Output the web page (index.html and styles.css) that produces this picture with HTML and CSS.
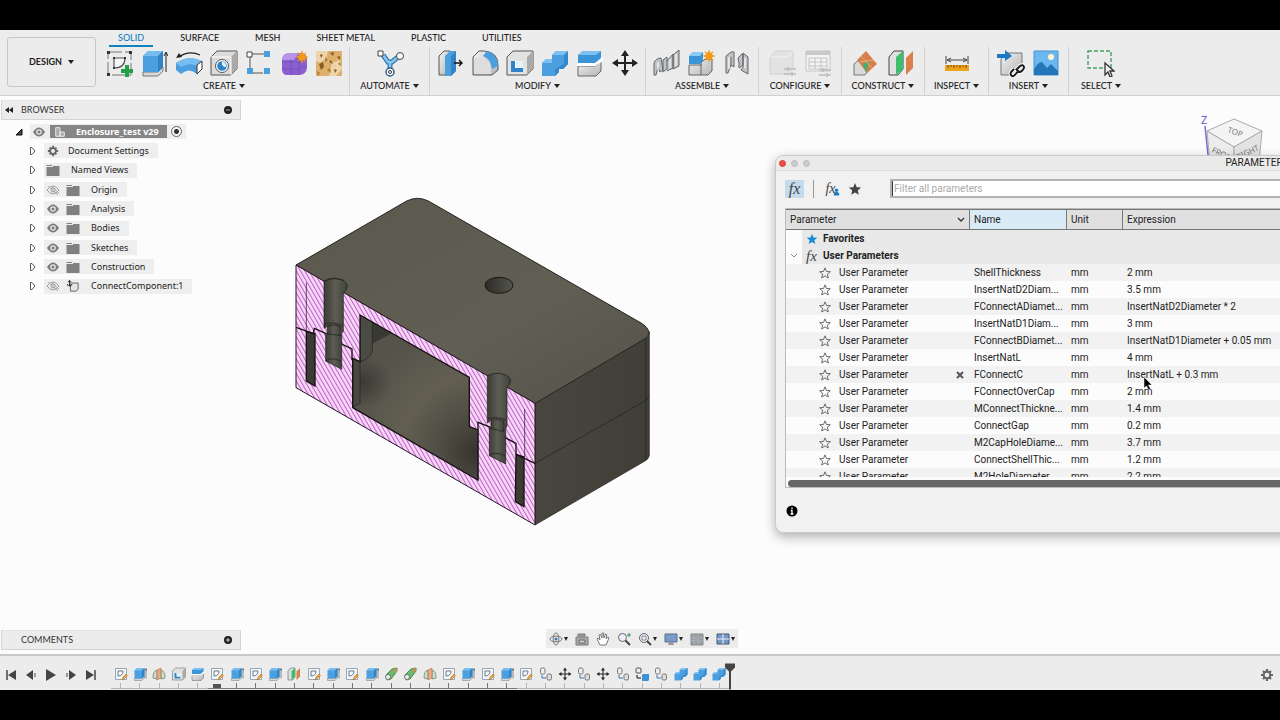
FILE: index.html
```html
<!DOCTYPE html>
<html lang="en">
<head>
<meta charset="utf-8">
<title>Enclosure_test v29</title>
<link rel="stylesheet" href="styles.css">
</head>
<body>
<svg class="sprite" aria-hidden="true">
  <defs>
    <linearGradient id="steel" x1="0" y1="0" x2="1" y2="1"><stop offset="0" stop-color="#f2f2f2"/><stop offset="1" stop-color="#b4b4b4"/></linearGradient>
    <symbol id="i-sketch" viewBox="0 0 28 28"><path d="M3 3h23v23H3z" fill="none" stroke="#777" stroke-dasharray="14 3"/><path d="M9 9h11Q20 19 9 19z" fill="#f6f6f6" stroke="#555" stroke-width="1.200"/><path d="M2 2h3v3H2zM24 2h3v3h-3zM2 24h3v3H2zM8 8h2v2H8zM19 8h2v2h-2zM8 18h2v2H8z" fill="#333"/><path d="M20 16h4v4h4v4h-4v4h-4v-4h-4v-4h4z" fill="#24a148"/></symbol>
    <symbol id="i-extrude" viewBox="0 0 28 28"><path d="M3 23h15l5-5v4l-5 5H3z" fill="#d8d8d8" stroke="#777"/><path d="M3 7l5-5h15v16l-5 5H3z" fill="#4b9fdf"/><path d="M3 7l5-5h15l-5 5z" fill="#77bdf0"/><path d="M18 7l5-5v16l-5 5z" fill="#2f83c6"/><path d="M26 23V4m-2 3l2-4 2 4" stroke="#222" fill="none"/></symbol>
    <symbol id="i-revolve" viewBox="0 0 28 28"><path d="M4 8Q14 1 25 6" fill="none" stroke="#222" stroke-width="1.3"/><path d="M1 9l3-5 3 4z" fill="#222"/><path d="M1 14Q14 5 27 13l-5 12Q14 18 6 25l-5-4z" fill="#4b9fdf"/><path d="M1 14Q14 5 27 12l-5 5Q14 13 6 18z" fill="#78bdf0"/><path d="M22 16l5-4v8l-5 5z" fill="#fff" stroke="#333"/></symbol>
    <symbol id="i-hole" viewBox="0 0 28 28"><path d="M1 8l6-6h20v18l-6 6H1z" fill="#dcdcdc" stroke="#555"/><path d="M21 8l6-6v18l-6 6z" fill="#a9a9a9"/><path d="M1 8h20v18" fill="none" stroke="#fff"/><circle cx="12" cy="17" r="6.5" fill="#fff" stroke="#555"/><circle cx="12" cy="17" r="4.8" fill="#2e84c9"/><path d="M12 12q5 2 4 6-5 0-4-6" fill="#e4f2fb"/></symbol>
    <symbol id="i-pattern" viewBox="0 0 28 28"><path d="M5 6v18h18M5 5h18" stroke="#555" fill="none" stroke-dasharray="14 3"/><path d="M2 3h5v5H2z" fill="#fff" stroke="#444"/><path d="M19 2h6v6h-6zM2 19h6v6H2zM19 19h6v6h-6z" fill="#4b9fdf"/></symbol>
    <symbol id="i-form" viewBox="0 0 28 28"><path d="M2 10Q3 4 10 4h12q5 1 5 7v8q-1 7-8 7H7q-5 0-5-6z" fill="#8b5fd0"/><path d="M2 11Q3 4 10 4h9q-4 5-5 7z" fill="#b594ea"/><path d="M2 13h17l7-3M11 10v16M2 20h16l8-3M19 12v14" stroke="#6f49b4" fill="none" stroke-width=".6"/><use href="#burst" x="0" y="0"/></symbol>
    <symbol id="burst" viewBox="0 0 28 28"><path d="M22 1l1.300 4 3.500-2-2 3.500 4 1.500-4 1.500 2 3.500-3.500-2L22 15l-1.300-4-3.500 2 2-3.500-4-1.500 4-1.500-2-3.500 3.500 2z" fill="#f39a12"/></symbol>
    <symbol id="i-volume" viewBox="0 0 28 28"><path d="M1 2h26v25H1z" fill="#dcb06c"/><path d="M1 2h12l-2 8-6 4-4-2zM17 14l8-3 2 9-6 7h-7z" fill="#ecd5ac"/><path d="M5 5l3 1-2 3zM15 4l4-1-1 4zM4 15l4-2 1 5-3 3zM14 13l2-2 2 4zM19 20l3 1-2 3zM22 8l3-1v4z" fill="#8a5a20"/><path d="M10 8l3 3-3 2zM12 21l3-2 1 5zM23 15l2-2 1 4zM2 22l3 2-2 3z" fill="#b9772c"/></symbol>
    <symbol id="i-auto" viewBox="0 0 28 28"><path d="M7 6l5 7h4l6-5M14 13v8" stroke="#2e79b5" stroke-width="5" fill="none"/><path d="M7 6l5 7h4l6-5M14 13v8" stroke="#8fc7ec" stroke-width="2.500" fill="none"/><path d="M2 2h5v5H2z" fill="#fff" stroke="#444"/><circle cx="24" cy="7" r="3.500" fill="#fff" stroke="#444"/><circle cx="14" cy="23" r="4" fill="#fff" stroke="#2e5f8c" stroke-width="1.500"/><circle cx="14" cy="23" r="1.500" fill="none" stroke="#333"/></symbol>
    <symbol id="i-press" viewBox="0 0 28 28"><path d="M3 7l5-5h6v19l-5 5H3z" fill="url(#steel)" stroke="#555"/><path d="M9 7l5-5h6v20l-5 5H9z" fill="#4b9fdf"/><path d="M15 7l5-5v20l-5 5z" fill="#2f83c6"/><path d="M18 14h8m-3-3l3 3-3 3" stroke="#111" fill="none" stroke-width="1.400"/></symbol>
    <symbol id="i-fillet" viewBox="0 0 28 28"><path d="M2 8l6-6h5q14 1 14 14v5l-6 5H2z" fill="url(#steel)" stroke="#555"/><path d="M12 7l4-5q11 3 11 15l-6 3Q20 10 12 7z" fill="#4b9fdf"/><path d="M3 9h6q11 2 11 11v5H3z" fill="#dedede"/></symbol>
    <symbol id="i-shell" viewBox="0 0 28 28"><path d="M1 8l6-6h20v18l-6 6H1z" fill="#e2e2e2" stroke="#555"/><path d="M21 8l6-6v18l-6 6z" fill="#aaa"/><path d="M5 12h12v11H5z" fill="#fff"/><path d="M5 12l4 0v7h8v4H5z" fill="#2f83c6"/><path d="M10 12h7v7h-7z" fill="#e6f2fa"/></symbol>
    <symbol id="i-combine" viewBox="0 0 28 28"><path d="M1 14l4-4h6V6l4-4h12v13l-5 5h-4v3l-4 4H1z" fill="#4b9fdf"/><path d="M11 6l4-4h12l-4 4zM1 14l4-4h6v4z" fill="#7dc0f1"/><path d="M23 6l4-4v13l-5 5h-4v3l-4 4v-7l9-5z" fill="#3289cd"/></symbol>
    <symbol id="i-split" viewBox="0 0 28 28"><path d="M2 17h17l6-5v10l-5 5H2z" fill="url(#steel)" stroke="#666"/><path d="M1 14h18l8-6v4l-8 5H1z" fill="#fff"/><path d="M2 6l5-4h18v7l-6 5H2z" fill="#3b93d8"/><path d="M2 6l5-4h18l-5 4z" fill="#7dc0f1"/></symbol>
    <symbol id="i-move" viewBox="0 0 28 28"><path d="M14 4v20M4 14h20" stroke="#222" stroke-width="2"/><path d="M14 1l4 6h-8zM14 27l4-6h-8zM1 14l6-4v8zM27 14l-6-4v8z" fill="#222"/></symbol>
    <symbol id="i-newjoint" viewBox="0 0 28 28"><path d="M1 14q2-5 7-5l2 12-3 2-2-5-2 8H1zM10 11l4-3v12l-4 3zM14 12l6-7v14l-6 3M20 6l6-5v16l-6 3z" fill="#bfc3c7" stroke="#666"/><path d="M5 13v8M17 10v9M23 5v12" stroke="#eee" stroke-width="1.500"/></symbol>
    <symbol id="i-component" viewBox="0 0 28 28"><path d="M1 16h12v-2l4-4h7v12l-4 4H1z" fill="url(#steel)" stroke="#666"/><path d="M13 15v11" stroke="#666"/><path d="M1 7l4-4h10v9l-3 3H1z" fill="#3b93d8"/><path d="M1 7l4-4h10l-3 4z" fill="#8accf5"/><use href="#burst" x="-1" y="-1"/></symbol>
    <symbol id="i-joint" viewBox="0 0 28 28"><path d="M3 7l5-4h3v15l-3-2-3 8H3zM8 8v9M20 5v11l-4 3v-5l-1-5 4-4zM20 4l5 4v17l-7-4 2-3z" fill="#bfc3c7" stroke="#666"/><path d="M6 8v12M22 9v10" stroke="#f2f2f2" stroke-width="1.500"/></symbol>
    <symbol id="i-config" viewBox="0 0 28 28"><path d="M1 8l6-6h17v18l-5 5H1z" fill="#e2e2e2" stroke="#d2d2d2"/><path d="M1 8h18l5-6" stroke="#f2f2f2" fill="none"/><path d="M15 20h12M15 25h12M19 18v4M23 23v4" stroke="#bbb" stroke-width="1.500"/></symbol>
    <symbol id="i-cfgtable" viewBox="0 0 28 28"><path d="M2 2h24v20H2z" fill="#f3f3f3" stroke="#c4c4c4"/><path d="M2 2h24v4H2z" fill="#c9c9c9"/><path d="M5 9h18v11H5zM5 13h18M5 17h18M11 9v11M17 9v11" stroke="#c4c4c4" fill="none"/><path d="M15 21h12M15 26h12M19 19v4M23 24v4" stroke="#bbb" stroke-width="1.500"/></symbol>
    <symbol id="i-offsetplane" viewBox="0 0 28 28"><path d="M2 15l6-5 9 3v8l-4 5H2z" fill="#dadada" stroke="#777"/><path d="M5 11l9-9 11 13-10 9z" fill="#d5804b"/><path d="M11 15l6-3-3 12z" fill="#3db26b"/><path d="M8 13l14-2M9 7l11 12" stroke="#f0b48b" stroke-width=".8"/></symbol>
    <symbol id="i-midplane" viewBox="0 0 28 28"><path d="M2 8l5-6h9v18l-5 6H2z" fill="#e0e0e0" stroke="#444"/><path d="M9 8l7-6v18l-7 6z" fill="#3cc06d"/><path d="M19 9l7-7v17l-7 7z" fill="#d9804b"/></symbol>
    <symbol id="i-measure" viewBox="0 0 28 28"><path d="M3 7v8M25 7v8M4 11h20M8 9l-4 2 4 2M20 9l4 2-4 2" stroke="#444" fill="none"/><path d="M2 16h24v6H2z" fill="#eda21b"/><path d="M5 16v3M8 16v2M11 16v3M14 16v2M17 16v3M20 16v2M23 16v3" stroke="#754b00"/></symbol>
    <symbol id="i-derive" viewBox="0 0 28 28"><path d="M4 10l6-6h15v16l-5 6H4z" fill="url(#steel)" stroke="#777"/><path d="M0 5h8V1l7 6-7 5V9H0z" fill="#1b78c2"/><path d="M17 20l-2 2q-3 3 0 5 2 1 6-5l-2-2M19 21l4-4q3-2 4 1 0 3-4 5h-3" stroke="#fff" stroke-width="4" fill="none"/><path d="M17 20l-2 2q-3 3 0 5 2 1 6-5l-2-2M19 21l4-4q3-2 4 1 0 3-4 5h-3" stroke="#1b1b1b" stroke-width="2" fill="none"/></symbol>
    <symbol id="i-image" viewBox="0 0 28 28"><path d="M2 2h24v24H2z" fill="#6db7f0" stroke="#4593d1"/><circle cx="19" cy="8" r="3" fill="#fff6cf"/><path d="M2 20q5-8 8-7l5 6 4-4 7 7v4H2z" fill="#2476b8"/></symbol>
    <symbol id="i-select" viewBox="0 0 28 28"><path d="M1 2h23v17H1z" fill="none" stroke="#41a362" stroke-width="1.400" stroke-dasharray="4 2"/><path d="M18 14v12l3-3 2 5 2-1-2-5h4z" fill="#eee" stroke="#333" stroke-width="1.300"/></symbol>

    <symbol id="s-sketch" viewBox="0 0 14 14"><path d="M1.500 1.500h11v11h-11z" fill="#f4f7fa" stroke="#98a6b5"/><path d="M4 4h5q0 5-5 5z" fill="none" stroke="#6d7a88"/><path d="M8 13l1-3 3-3 1.500 1.500-3 3z" fill="#f0a63c" stroke="#a9641c" stroke-width=".5"/></symbol>
    <symbol id="s-loft" viewBox="0 0 14 14"><path d="M1 11q0-7 4-8v9zM13 11q0-7-4-8v9z" fill="#cfe0d0" stroke="#7d9a82"/><path d="M5 3l4-2v10l-4 2z" fill="#e6ab88" stroke="#a95e35" stroke-width=".5"/></symbol>
    <symbol id="s-pipe" viewBox="0 0 14 14"><path d="M2 8l6-6 5-1v3l-6 8-4 1z" fill="#6cba70" stroke="#3f8a47"/><circle cx="4" cy="10" r="2.500" fill="#eee" stroke="#777"/><path d="M9 2l4-1v3l-2 2z" fill="#c98f56"/></symbol>
    <symbol id="s-link" viewBox="0 0 14 14"><rect x="1.500" y="1" width="4.500" height="6" rx="1.500" fill="#eee" stroke="#777"/><rect x="8" y="7" width="4.500" height="6" rx="1.500" fill="#ddd" stroke="#777"/><path d="M3 8v3h4" fill="none" stroke="#3d73b8"/></symbol>
    <symbol id="s-comp" viewBox="0 0 14 14"><rect x="1" y="1" width="5" height="5" rx="1" fill="#eee" stroke="#555"/><path d="M7 8l1-1h6v6l-1 1H7z" fill="#3b93d8"/><path d="M2 8v3h4" fill="none" stroke="#111"/></symbol>

    <symbol id="eye" viewBox="0 0 14 12"><path d="M1 6q6-9 12 0-6 9-12 0z" fill="#7c7c7c"/><circle cx="7" cy="6" r="2.800" fill="#e8e8e8"/><circle cx="7" cy="6" r="1.500" fill="#7c7c7c"/></symbol>
    <symbol id="eye-off" viewBox="0 0 14 12"><path d="M1 6q6-8 12 0-6 8-12 0zM2 2l10 9M5 2l8 7" fill="none" stroke="#a0a0a0"/><circle cx="7" cy="6" r="2" fill="none" stroke="#999"/></symbol>
    <symbol id="folder" viewBox="0 0 14 12"><path d="M.5 1h5.500v1H.5zM.5 3h6.500V2h6.500v10H.5z" fill="#808080"/></symbol>
    <symbol id="gear" viewBox="0 0 14 14"><path d="M7 1v12M1 7h12M3 3l8 8M11 3l-8 8" stroke="#666" stroke-width="2.200"/><circle cx="7" cy="7" r="3.300" fill="#eee" stroke="#666" stroke-width="2"/></symbol>
    <symbol id="anchorbox" viewBox="0 0 14 14"><path d="M4 4.500l1-1h8v7l-2 2.500H4z" fill="#e4e4e4" stroke="#555"/><path d="M3 0v7M0 5q3 4 6 0M1 2h4" fill="none" stroke="#333" stroke-width="1.200"/></symbol>
    <symbol id="twisty" viewBox="0 0 8 10"><path d="M1.500 1.500h1.500L6 5 3 8.500H1.500z" fill="#fff" stroke="#555"/></symbol>
    <symbol id="star" viewBox="0 0 14 14"><path d="M7 1l1.700 4.200 4.500.3-3.500 2.900 1.200 4.400L7 10.400l-3.900 2.400 1.200-4.400L.8 5.500l4.500-.3z"/></symbol>
    <symbol id="minus" viewBox="0 0 8 8"><circle cx="4" cy="4" r="4" fill="#222"/><path d="M2 4h4" stroke="#aaa"/></symbol>
    <symbol id="plus" viewBox="0 0 8 8"><circle cx="4" cy="4" r="4" fill="#222"/><path d="M2 4h4M4 2v4" stroke="#ccc"/></symbol>
  </defs>
</svg>

<div class="app">
  <header class="toolbar">
    <button class="workspace">DESIGN <i class="caret"></i></button>
    <div class="ribbon">
      <nav class="tabs">
        <button class="tab active">SOLID</button><button class="tab">SURFACE</button><button class="tab">MESH</button><button class="tab">SHEET METAL</button><button class="tab">PLASTIC</button><button class="tab">UTILITIES</button>
      </nav>
      <div class="groups">
        <section class="group">
          <div class="tools">
            <button aria-label="Create sketch"><svg><use href="#i-sketch"/></svg></button>
            <button aria-label="Extrude"><svg><use href="#i-extrude"/></svg></button>
            <button aria-label="Revolve"><svg><use href="#i-revolve"/></svg></button>
            <button aria-label="Hole"><svg><use href="#i-hole"/></svg></button>
            <button aria-label="Pattern"><svg><use href="#i-pattern"/></svg></button>
            <button aria-label="Create form"><svg><use href="#i-form"/></svg></button>
            <button aria-label="Volumetric lattice"><svg><use href="#i-volume"/></svg></button>
          </div>
          <button class="menu">CREATE<i class="caret"></i></button>
        </section>
        <section class="group w80">
          <div class="tools"><button aria-label="Automated modeling"><svg><use href="#i-auto"/></svg></button></div>
          <button class="menu">AUTOMATE<i class="caret"></i></button>
        </section>
        <section class="group">
          <div class="tools">
            <button aria-label="Press pull"><svg><use href="#i-press"/></svg></button>
            <button aria-label="Fillet"><svg><use href="#i-fillet"/></svg></button>
            <button aria-label="Shell"><svg><use href="#i-shell"/></svg></button>
            <button aria-label="Combine"><svg><use href="#i-combine"/></svg></button>
            <button aria-label="Split body"><svg><use href="#i-split"/></svg></button>
            <button aria-label="Move"><svg><use href="#i-move"/></svg></button>
          </div>
          <button class="menu">MODIFY<i class="caret"></i></button>
        </section>
        <section class="group w113">
          <div class="tools">
            <button aria-label="Joint"><svg><use href="#i-newjoint"/></svg></button>
            <button aria-label="New component"><svg><use href="#i-component"/></svg></button>
            <button aria-label="As-built joint"><svg><use href="#i-joint"/></svg></button>
          </div>
          <button class="menu">ASSEMBLE<i class="caret"></i></button>
        </section>
        <section class="group w83">
          <div class="tools">
            <button aria-label="Configure"><svg><use href="#i-config"/></svg></button>
            <button aria-label="Configuration table"><svg><use href="#i-cfgtable"/></svg></button>
          </div>
          <button class="menu">CONFIGURE<i class="caret"></i></button>
        </section>
        <section class="group w83">
          <div class="tools">
            <button aria-label="Offset plane"><svg><use href="#i-offsetplane"/></svg></button>
            <button aria-label="Midplane"><svg><use href="#i-midplane"/></svg></button>
          </div>
          <button class="menu">CONSTRUCT<i class="caret"></i></button>
        </section>
        <section class="group w64">
          <div class="tools"><button aria-label="Measure"><svg><use href="#i-measure"/></svg></button></div>
          <button class="menu">INSPECT<i class="caret"></i></button>
        </section>
        <section class="group w80">
          <div class="tools">
            <button aria-label="Insert derive"><svg><use href="#i-derive"/></svg></button>
            <button aria-label="Insert canvas"><svg><use href="#i-image"/></svg></button>
          </div>
          <button class="menu">INSERT<i class="caret"></i></button>
        </section>
        <section class="group w64 last">
          <div class="tools"><button aria-label="Select"><svg><use href="#i-select"/></svg></button></div>
          <button class="menu">SELECT<i class="caret"></i></button>
        </section>
      </div>
    </div>
  </header>

  <main class="viewport">
    <svg class="model" viewBox="0 0 1170 1050" role="img" aria-label="Enclosure section view">
      <defs>
        <pattern id="hatch" width="11" height="11" patternUnits="userSpaceOnUse" patternTransform="rotate(-30)"><path d="M0 0h11v11H0z" fill="#fbd5fb"/><path d="M0 0h3v11H0z" fill="#b565bd"/></pattern>
        <linearGradient id="topf" x1="0" y1="0" x2="1" y2="1"><stop offset="0" stop-color="#5b594e"/><stop offset=".6" stop-color="#615f53"/><stop offset="1" stop-color="#55534a"/></linearGradient>
        <linearGradient id="sidef" x1="0" y1="0" x2="1" y2="0"><stop offset="0" stop-color="#48463e"/><stop offset="1" stop-color="#403e37"/></linearGradient>
        <linearGradient id="bore" x1="0" y1="0" x2="1" y2="0"><stop offset="0" stop-color="#3d3d37"/><stop offset=".5" stop-color="#5c5d53"/><stop offset="1" stop-color="#40413a"/></linearGradient>
        <linearGradient id="deep" x1="0" y1="0" x2="1" y2="0"><stop offset="0" stop-color="#2c2b27"/><stop offset="1" stop-color="#55564c"/></linearGradient>
        <radialGradient id="cav" cx="590" cy="800" r="380" gradientUnits="userSpaceOnUse"><stop offset="0" stop-color="#35342d"/><stop offset=".3" stop-color="#504e44"/><stop offset=".6" stop-color="#625f52"/><stop offset="1" stop-color="#56534a"/></radialGradient>
        <radialGradient id="shade"><stop offset="0" stop-color="#34342e" stop-opacity=".8"/><stop offset="1" stop-color="#34342e" stop-opacity="0"/></radialGradient>
        <clipPath id="cavclip"><path d="M240 390L568 577V725L596 735V885L218 668V520L240 530z"/></clipPath>
      </defs>
      <path d="M765 655L1097 460Q1108 452 1108 440V812Q1106 822 1095 828L765 1020z" fill="url(#sidef)" stroke="#222" stroke-width="2"/>
      <path d="M48 240L380 48Q412 32 445 48L1085 415Q1122 440 1097 460L765 655z" fill="url(#topf)" stroke="#24241f" stroke-width="3"/>
      <path d="M1097 460V826M765 835L1095 648 1108 635" fill="none" stroke="#201f1b" stroke-width="2"/>
      <ellipse cx="657" cy="301" rx="42" ry="24" fill="url(#deep)" stroke="#171714" stroke-width="3"/>
      <path d="M48 240L765 655V1020L48 608z" fill="url(#hatch)" stroke="#211421" stroke-width="3"/>
      <g clip-path="url(#cavclip)">
        <path d="M200 380h420v520H200z" fill="url(#cav)"/>
        <ellipse cx="245" cy="590" rx="90" ry="80" fill="url(#shade)"/>
        <path d="M240 390L335 445 275 478V500Q270 520 240 530z" fill="#393831"/>
        <path d="M240 390L277 410V500Q266 524 240 530z" fill="#4a4b42" stroke="#22221d" stroke-width="2"/>
        <path d="M218 520L240 530V655L218 668z" fill="#484840" stroke="#22221d" stroke-width="2"/>
      </g>
      <g stroke="#171114" stroke-width="4" fill="none">
        <path d="M240 390L568 577V725L594 735V885L218 668V520L240 530z"/>
        <path d="M79 440L105 446V603L79 588zM708 808L732 816V965L706 950z" fill="#3c3b34"/>
        <path d="M79 293V440M734 672V816" stroke-width="2"/>
        <path d="M48 427L100 446 103 430 144 448M180 453V475L216 492V525M594 735V712L634 728M670 738V755L708 775V808L765 835"/>
      </g>
      <g stroke="#1d1c19" stroke-width="2" fill="url(#bore)">
        <path d="M137 445H185V553L137 528z"/><path d="M137 528Q150 515 183 528" fill="none"/>
        <path d="M142 420H181V452L142 446z"/>
        <path d="M132 289Q145 278 168 280 202 285 202 304 200 316 190 324V440Q183 452 181 424 160 412 142 424L132 430z"/>
        <path d="M133 418Q160 408 189 422M133 289Q160 275 190 286" fill="none"/>
        <path d="M628 728H677V837L628 812z"/><path d="M628 812Q645 798 675 812" fill="none"/>
        <path d="M633 704H671V740L633 730z"/>
        <path d="M622 573Q635 563 657 565 692 570 692 588 690 600 681 607V725Q673 736 671 708 650 697 633 706L622 714z"/>
        <path d="M623 702Q650 692 680 706" fill="none"/>
      </g>
    </svg>

    <svg class="viewcube" viewBox="0 0 70 70" role="img" aria-label="View cube">
      <path d="M9 22L36 10 64 22 36 38z" fill="#f4f4f4" stroke="#aaa"/><path d="M9 22L36 38V68L12 54z" fill="#ececec" stroke="#aaa"/><path d="M64 22L36 38V68L61 54z" fill="#e3e3e3" stroke="#aaa"/>
      <path d="M7 17L11 56" stroke="#7a6fd2" stroke-width="1.500"/>
      <text x="3" y="15" class="axis">Z</text>
      <text class="face" transform="translate(29 23) rotate(20)">TOP</text>
      <text class="face" transform="translate(13 43) rotate(25)">FRONT</text>
      <text class="face" transform="translate(40 51) rotate(-25)">RIGHT</text>
    </svg>

    <aside class="sidebar">
      <section>
        <header class="panel-bar"><svg class="collapse" viewBox="0 0 8 6"><path d="M4 0v6L0 3zM8 0v6L4 3z" fill="#222"/></svg><h2>BROWSER</h2><button aria-label="Hide browser"><svg><use href="#minus"/></svg></button></header>
        <ul class="tree">
          <li class="root"><button class="twist" aria-label="Collapse"><svg viewBox="0 0 8 8"><path d="M7 1v6H1z" fill="#444" stroke="#111"/></svg></button><span class="chip"><svg class="ico"><use href="#eye"/></svg><span class="selected"><svg viewBox="0 0 14 14" class="ico"><path d="M2 2h5v10H2zM7 7h5v5H7z" fill="#aaa" stroke="#f4f4f4"/></svg><b>Enclosure_test v29</b></span><input type="radio" checked aria-label="Activate component"></span></li>
          <li><button class="twist" aria-label="Expand"><svg><use href="#twisty"/></svg></button><span class="chip"><svg class="ico"><use href="#gear"/></svg><span class="doc">Document Settings</span></span></li>
          <li><button class="twist" aria-label="Expand"><svg><use href="#twisty"/></svg></button><span class="chip"><svg class="ico"><use href="#folder"/></svg><span class="name">Named Views</span></span></li>
          <li><button class="twist" aria-label="Expand"><svg><use href="#twisty"/></svg></button><span class="chip"><svg class="ico"><use href="#eye-off"/></svg><svg class="ico"><use href="#folder"/></svg><span class="name">Origin</span></span></li>
          <li><button class="twist" aria-label="Expand"><svg><use href="#twisty"/></svg></button><span class="chip"><svg class="ico"><use href="#eye"/></svg><svg class="ico"><use href="#folder"/></svg><span class="name">Analysis</span></span></li>
          <li><button class="twist" aria-label="Expand"><svg><use href="#twisty"/></svg></button><span class="chip"><svg class="ico"><use href="#eye"/></svg><svg class="ico"><use href="#folder"/></svg><span class="name">Bodies</span></span></li>
          <li><button class="twist" aria-label="Expand"><svg><use href="#twisty"/></svg></button><span class="chip"><svg class="ico"><use href="#eye"/></svg><svg class="ico"><use href="#folder"/></svg><span class="name">Sketches</span></span></li>
          <li><button class="twist" aria-label="Expand"><svg><use href="#twisty"/></svg></button><span class="chip"><svg class="ico"><use href="#eye"/></svg><svg class="ico"><use href="#folder"/></svg><span class="name">Construction</span></span></li>
          <li><button class="twist" aria-label="Expand"><svg><use href="#twisty"/></svg></button><span class="chip"><svg class="ico"><use href="#eye-off"/></svg><svg class="ico"><use href="#anchorbox"/></svg><span class="name">ConnectComponent:1</span></span></li>
        </ul>
      </section>
      <section><header class="panel-bar comments"><h2>COMMENTS</h2><button aria-label="Show comments"><svg><use href="#plus"/></svg></button></header></section>
    </aside>

    <div class="navbar">
      <button aria-label="Orbit"><svg viewBox="0 0 14 14"><ellipse cx="7" cy="7" rx="6" ry="2.800" fill="none" stroke="#777"/><ellipse cx="7" cy="7" rx="2.800" ry="6" fill="none" stroke="#777"/><circle cx="7" cy="7" r="1.500" fill="#2c7bc0"/></svg><i class="caret"></i></button>
      <button aria-label="Look at"><svg viewBox="0 0 14 14"><path d="M1 5h12v8H1zM3 2h7v2H3z" fill="#aaa" stroke="#777"/><path d="M4 8h6v3H4z" fill="#ccc" stroke="#666"/></svg></button>
      <button aria-label="Pan"><svg viewBox="0 0 14 14"><path d="M4 13L1 7l1-1 2 2-1-5 1.500-.5L6 6V1h1.500L8 6l1.500-4 1.300.5L10 7l2-2 1 1-3 7z" fill="#fff" stroke="#777"/></svg></button>
      <button aria-label="Zoom"><svg viewBox="0 0 14 14"><circle cx="5.500" cy="5.500" r="4" fill="#eef" stroke="#666"/><path d="M8.500 8.500l4.500 4.500" stroke="#444" stroke-width="2"/><path d="M10 3h4M12 1v4" stroke="#37945a"/></svg></button>
      <button aria-label="Fit"><svg viewBox="0 0 14 14"><circle cx="6" cy="6" r="4.500" fill="#eef" stroke="#666"/><path d="M4 4h4v4H4z" fill="none" stroke="#888"/><path d="M9 9l4 4" stroke="#444" stroke-width="2"/></svg><i class="caret"></i></button>
      <button aria-label="Display settings"><svg viewBox="0 0 14 14"><path d="M1 2h12v8H1z" fill="#7a9cc9" stroke="#5a6f8b"/><path d="M5 10h4l1 3H4z" fill="#999"/></svg><i class="caret"></i></button>
      <button aria-label="Grid and snaps"><svg viewBox="0 0 14 14"><path d="M1 2h12v11H1z" fill="#999ea6" stroke="#888"/><path d="M1 6h12M1 9h12M4 2v11M8 2v11" stroke="#b9bcc1" stroke-width=".6"/></svg><i class="caret"></i></button>
      <button aria-label="Viewports"><svg viewBox="0 0 14 14"><path d="M1 2h12v10H1z" fill="#7499c8" stroke="#456"/><path d="M7 2v10M1 7h12" stroke="#e9eef5"/></svg><i class="caret"></i></button>
    </div>

    <section class="dialog" role="dialog" aria-labelledby="dlg-title">
      <header class="titlebar"><span class="lights"><button class="close" aria-label="Close"></button><button aria-label="Minimize"></button><button aria-label="Zoom window"></button></span><h2 id="dlg-title">PARAMETERS</h2></header>
      <div class="filters">
        <button class="fx on" aria-label="All parameters"><em>fx</em></button>
        <span class="divider"></span>
        <button class="fx user" aria-label="User parameters"><em>fx</em><svg viewBox="0 0 8 8"><circle cx="4" cy="2" r="2" fill="#1b7ac0"/><path d="M1 8V5q3-2 6 0v3z" fill="#1b7ac0"/></svg></button>
        <button class="fav" aria-label="Favorites"><svg fill="#444"><use href="#star"/></svg></button>
        <input type="text" aria-label="Filter" placeholder="Filter all parameters">
      </div>
      <div class="tablebox">
        <div class="tablescroll">
        <table>
          <colgroup><col class="c1"><col class="c2"><col class="c3"><col></colgroup>
          <thead><tr><th><span class="sort">Parameter<svg viewBox="0 0 8 6"><path d="M1 1l3 3 3-3" fill="none" stroke="#333" stroke-width="1.300"/></svg></span></th><th class="hot">Name</th><th>Unit</th><th>Expression</th></tr></thead>
          <tbody>
            <tr class="sec"><td colspan="4"><span class="cell"><i class="gutter"></i><svg class="st" fill="#1a8bd0"><use href="#star"/></svg><b>Favorites</b></span></td></tr>
            <tr class="sec"><td colspan="4"><span class="cell"><i class="gutter"><svg viewBox="0 0 8 6"><path d="M1 1l3 3 3-3" fill="none" stroke="#888"/></svg></i><em class="fxs">fx</em><b>User Parameters</b></span></td></tr>
            <tr><td><span class="cell item"><svg class="os"><use href="#star"/></svg>User Parameter</span></td><td>ShellThickness</td><td>mm</td><td>2 mm</td></tr>
            <tr><td><span class="cell item"><svg class="os"><use href="#star"/></svg>User Parameter</span></td><td>InsertNatD2Diam...</td><td>mm</td><td>3.5 mm</td></tr>
            <tr><td><span class="cell item"><svg class="os"><use href="#star"/></svg>User Parameter</span></td><td>FConnectADiamet...</td><td>mm</td><td>InsertNatD2Diameter * 2</td></tr>
            <tr><td><span class="cell item"><svg class="os"><use href="#star"/></svg>User Parameter</span></td><td>InsertNatD1Diam...</td><td>mm</td><td>3 mm</td></tr>
            <tr><td><span class="cell item"><svg class="os"><use href="#star"/></svg>User Parameter</span></td><td>FConnectBDiamet...</td><td>mm</td><td>InsertNatD1Diameter + 0.05 mm</td></tr>
            <tr><td><span class="cell item"><svg class="os"><use href="#star"/></svg>User Parameter</span></td><td>InsertNatL</td><td>mm</td><td>4 mm</td></tr>
            <tr><td><span class="cell item"><svg class="os"><use href="#star"/></svg>User Parameter<button class="del" aria-label="Delete"><svg viewBox="0 0 8 8"><path d="M1 1l6 6M7 1l-6 6" stroke="#555" stroke-width="2"/></svg></button></span></td><td>FConnectC</td><td>mm</td><td>InsertNatL + 0.3 mm</td></tr>
            <tr><td><span class="cell item"><svg class="os"><use href="#star"/></svg>User Parameter</span></td><td>FConnectOverCap</td><td>mm</td><td>2 mm</td></tr>
            <tr><td><span class="cell item"><svg class="os"><use href="#star"/></svg>User Parameter</span></td><td>MConnectThickne...</td><td>mm</td><td>1.4 mm</td></tr>
            <tr><td><span class="cell item"><svg class="os"><use href="#star"/></svg>User Parameter</span></td><td>ConnectGap</td><td>mm</td><td>0.2 mm</td></tr>
            <tr><td><span class="cell item"><svg class="os"><use href="#star"/></svg>User Parameter</span></td><td>M2CapHoleDiame...</td><td>mm</td><td>3.7 mm</td></tr>
            <tr><td><span class="cell item"><svg class="os"><use href="#star"/></svg>User Parameter</span></td><td>ConnectShellThic...</td><td>mm</td><td>1.2 mm</td></tr>
            <tr><td><span class="cell item"><svg class="os"><use href="#star"/></svg>User Parameter</span></td><td>M2HoleDiameter</td><td>mm</td><td>2.2 mm</td></tr>
          </tbody>
        </table>
        </div>
        <div class="hscroll"></div>
      </div>
      <footer><button class="info" aria-label="Information"><svg viewBox="0 0 12 12"><circle cx="6" cy="6" r="5.500" fill="#000"/><path d="M6 2.500v1.500M4.800 5.500H6V9M4.500 9h3" stroke="#fff" stroke-width="1.300" fill="none"/></svg></button></footer>
    </section>
    <svg class="pointer" viewBox="0 0 9 14"><path d="M1 0v11l2.500-2 2 4 2-1-2-4H9z" fill="#000" stroke="#fff" stroke-width=".5"/></svg>
  </main>

  <footer class="timeline">
    <div class="playback">
      <button aria-label="To start"><svg viewBox="0 0 12 12"><path d="M2 1v10" stroke="#444" stroke-width="1.500"/><path d="M11 1v10L3 6z" fill="#444"/></svg></button>
      <button aria-label="Step back"><svg viewBox="0 0 12 12"><path d="M8 1v10L1 6z" fill="#444"/><path d="M10 4v4" stroke="#444"/></svg></button>
      <button aria-label="Play"><svg viewBox="0 0 12 12"><path d="M1 0v12l10-6z" fill="#444"/></svg></button>
      <button aria-label="Step forward"><svg viewBox="0 0 12 12"><path d="M4 1v10l7-5z" fill="#444"/><path d="M2 4v4" stroke="#444"/></svg></button>
      <button aria-label="To end"><svg viewBox="0 0 12 12"><path d="M10 1v10" stroke="#444" stroke-width="1.500"/><path d="M1 1v10l8-5z" fill="#444"/></svg></button>
    </div>
    <ol class="history">
      <li><svg><use href="#s-sketch"/></svg></li><li><svg><use href="#i-extrude"/></svg></li><li><svg><use href="#s-loft"/></svg></li><li><svg><use href="#i-shell"/></svg></li><li><svg><use href="#i-split"/></svg></li>
      <li class="dark mark"><svg><use href="#s-sketch"/></svg></li><li class="dark"><svg><use href="#i-extrude"/></svg></li><li class="dark"><svg><use href="#s-sketch"/></svg></li><li class="dark"><svg><use href="#i-extrude"/></svg></li><li class="dark"><svg><use href="#i-midplane"/></svg></li>
      <li class="dark"><svg><use href="#s-sketch"/></svg></li><li class="dark"><svg><use href="#i-extrude"/></svg></li><li class="dark"><svg><use href="#s-sketch"/></svg></li><li class="dark"><svg><use href="#i-extrude"/></svg></li><li class="dark"><svg><use href="#s-pipe"/></svg></li>
      <li class="dark"><svg><use href="#s-pipe"/></svg></li><li class="dark"><svg><use href="#s-loft"/></svg></li><li class="dark"><svg><use href="#s-sketch"/></svg></li><li class="dark"><svg><use href="#i-extrude"/></svg></li><li class="dark"><svg><use href="#s-sketch"/></svg></li>
      <li class="dark"><svg><use href="#i-extrude"/></svg></li><li><svg><use href="#s-sketch"/></svg></li><li><svg><use href="#s-link"/></svg></li><li><svg><use href="#i-move"/></svg></li><li><svg><use href="#s-link"/></svg></li>
      <li><svg><use href="#i-move"/></svg></li><li><svg><use href="#s-link"/></svg></li><li><svg><use href="#s-comp"/></svg></li><li><svg><use href="#s-link"/></svg></li><li><svg><use href="#i-combine"/></svg></li>
      <li><svg><use href="#i-combine"/></svg></li><li><svg><use href="#i-combine"/></svg></li>
    </ol>
    <svg class="playhead" viewBox="0 0 10 26"><path d="M0 0h10v4L6 8v18H4V8L0 4z" fill="#444"/></svg>
    <button class="settings" aria-label="Timeline settings"><svg><use href="#gear"/></svg></button>
  </footer>
</div>
</body>
</html>
```
FILE: styles.css
```css
* { box-sizing: border-box; }
body { margin: 0; background: #000; font: 9px/14px "Noto Sans", "Open Sans", sans-serif; color: #222; }
button { border: 0; padding: 0; margin: 0; background: none; font: inherit; color: inherit; display: flex; align-items: center; justify-content: center; }
h2 { margin: 0; font: inherit; }
svg { display: block; }
.sprite { position: absolute; width: 0; height: 0; }
.caret { border: 3px solid transparent; border-top: 4px solid #222; border-bottom: 0; margin-left: 3px; }

.app { margin: 30px 0; height: calc(100vh - 60px); display: flex; flex-direction: column; overflow: hidden; background: #fcfcfc; }

.toolbar { display: flex; background: #ececec; border-bottom: 1px solid #d0d0d0; font: 500 9px/14px Lato, sans-serif; height: 66px; }
.workspace { width: 89px; height: 50px; margin: 7px 9px 0 7px; border: 1px solid #c6c6c6; border-radius: 3px; font-weight: 700; gap: 3px; }
.ribbon { flex: 1; min-width: 0; }
.tabs { display: flex; gap: 18px; padding-left: 4px; }
.tab { height: 17px; padding: 0 9px; border-bottom: 2px solid transparent; white-space: nowrap; }
.tab.active { color: #0f83bd; border-color: #0f83bd; }
.groups { display: flex; }
.group { padding: 2px 6px 0; margin-bottom: 3px; border-right: 1px solid #d2d2d2; display: flex; flex-direction: column; align-items: center; flex: none; }
.group:first-child { padding-left: 0; }
.group.last { border: 0; }
.tools { display: flex; gap: 7px; }
.tools svg { width: 28px; height: 28px; }
.menu { height: 18px; }
.w64 { width: 64px; padding: 2px 0 0; }
.w80 { width: 80px; }
.w83 { width: 83px; }
.w113 { width: 113px; }

.viewport { flex: 1; min-height: 0; position: relative; overflow: hidden; }
.model { position: absolute; left: 280px; top: 89px; width: 390px; height: 350px; }
.viewcube { position: absolute; left: 1198px; top: 13px; width: 70px; height: 70px; }
.axis { font-size: 11px; fill: #6a5fc8; }
.face { font-size: 8px; fill: #777; }

.sidebar { width: 241px; height: 100%; padding: 4px 0 4px 1px; display: flex; flex-direction: column; justify-content: space-between; }
.panel-bar { height: 20px; display: flex; align-items: center; background: #ececec; border: 1px solid #d4d4d4; border-top-color: #e4e4e4; padding: 0 8px 0 3px; font: 9px/14px Lato, sans-serif; color: #333; }
.panel-bar h2 { flex: 1; margin-left: 8px; }
.comments h2 { margin-left: 16px; }
.panel-bar button svg { width: 8px; height: 8px; }
.collapse { width: 8px; height: 6px; }
.tree { list-style: none; margin: 2px 0 0; padding: 0; height: 174px; display: grid; grid-template-rows: repeat(9, 1fr); }
.tree li { display: flex; align-items: center; padding-left: 27px; }
.tree .root { padding-left: 13px; }
.twist { width: 9px; margin-right: 7px; }
.twist svg { width: 8px; height: 10px; }
.chip { display: flex; align-items: center; gap: 6px; height: 15px; padding: 0 9px 0 2px; background: #eee; white-space: nowrap; }
.root .chip { padding-right: 4px; gap: 4px; }
.ico { width: 14px; height: 12px; }
.name { margin-left: 5px; }
.doc { margin-left: 2px; }
.selected { display: flex; align-items: center; gap: 9px; height: 13px; padding: 0 8px 0 3px; background: #868686; color: #fff; }
.root input { appearance: none; width: 11px; height: 11px; margin: 0; border: 1px solid #666; border-radius: 50%; background: radial-gradient(#333 0 2px, #f4f4f4 3px); }

.navbar { position: absolute; left: 546px; bottom: 6px; height: 19px; padding: 0 3px; display: flex; align-items: center; gap: 7px; background: #ececec; }
.navbar svg { width: 14px; height: 14px; }
.navbar .caret { margin-left: 1px; border-width: 4px 2px 0; }

.dialog { position: absolute; left: 775px; top: 59px; width: 964px; height: 378px; display: flex; flex-direction: column; background: #f1f1f1; border: 1px solid #c9c9c9; border-radius: 8px; box-shadow: 0 4px 12px rgba(0, 0, 0, .3); overflow: clip; font: 10px/14px Roboto, sans-serif; }
.titlebar { height: 16px; display: flex; align-items: center; background: #eaeaea; border-bottom: 1px solid #ddd; }
.titlebar h2 { flex: 1; text-align: center; margin-right: 42px; }
.lights { display: flex; gap: 5px; padding-left: 3px; width: 42px; }
.lights button { width: 7px; height: 7px; border-radius: 50%; background: #ccc; border: 1px solid #bbb; }
.lights .close { background: #ee4d48; border-color: #d8403b; }
.filters { display: flex; align-items: center; padding: 8px 0 0 9px; }
.fx { width: 19px; height: 18px; font: 16px/18px "Liberation Serif", serif; color: #444; }
.fx.on { background: #c3dbec; }
.user { font-size: 14px; }
.user svg { width: 7px; height: 8px; margin: 6px 0 0 -3px; }
.divider { width: 1px; height: 18px; background: #999; margin: 0 9px; }
.fav svg { width: 14px; height: 14px; }
.fav { margin: 0 28px 0 6px; }
.filters input { flex: 1; height: 19px; border: 2px solid #b4b4b4; border-right: 0; background: #fff; padding: 0 2px; font: inherit; box-shadow: inset 1px 0 #333; }
.filters input::placeholder { color: #aaa; opacity: 1; }

.tablebox { margin: 10px 0 0 9px; height: 282px; border: 1px solid #bbb; border-right: 0; background: #fcfcfc; }
.tablescroll { height: 268px; overflow: hidden; }
table { width: 100%; table-layout: fixed; border-collapse: separate; border-spacing: 0; }
.c1 { width: 184px; } .c2 { width: 97px; } .c3 { width: 56px; }
th { height: 21px; padding: 0 4px; text-align: left; font-weight: 400; background: #e0e0e0; border: 1px solid #777; border-left: 0; }
th.hot { background: #d9ebf7; }
.sort { display: flex; justify-content: space-between; align-items: center; }
.sort svg { width: 8px; height: 6px; }
td { height: 17px; padding: 0 4px; white-space: nowrap; line-height: 16px; }
tr:nth-child(odd) td { background: #f2f2f2; }
tr.sec td { background: #e8e8e8; padding: 0; }
.cell { display: flex; align-items: center; height: 17px; }
.gutter { width: 16px; height: 17px; background: #fcfcfc; display: flex; align-items: center; justify-content: center; }
.gutter svg { width: 8px; height: 6px; }
.st { width: 12px; height: 12px; margin: 0 5px 0 4px; }
.fxs { width: 13px; margin: 0 4px; font: italic 15px/16px "Liberation Serif", serif; color: #444; }
.item { padding-left: 29px; }
.os { width: 12px; height: 12px; margin-right: 8px; fill: none; stroke: #555; overflow: visible; }
.del { margin: 0 2px 0 auto; }
.del svg { width: 8px; height: 8px; }
.hscroll { height: 7px; margin: 3px 0 0 2px; background: #666; border-radius: 4px 0 0 4px; }
.dialog footer { padding: 17px 10px; }
.info svg { width: 12px; height: 12px; }
.pointer { position: absolute; left: 1143px; top: 281px; width: 9px; height: 14px; }

.timeline { height: 36px; display: flex; align-items: flex-start; background: #ececec; border-top: 2px solid #c8c8c8; }
.playback { display: flex; gap: 8px; padding: 13px 0 0 5px; width: 111px; }
.playback svg { width: 12px; height: 12px; }
.history { list-style: none; margin: 0; padding: 11px 0 0; width: 618px; display: grid; grid-template-columns: repeat(32, 1fr); }
.history li { display: flex; flex-direction: column; align-items: center; border-bottom: 1px solid #b5b5b5; }
.history svg { width: 14px; height: 14px; }
.history li::after { content: ""; width: 1px; height: 5px; margin-top: 2px; background: #b5b5b5; }
.history .dark { border-color: #777; }
.history .dark::after { background: #777; }
.history .mark::after { width: 8px; height: 4px; margin-top: 3px; background: #555; }
.playhead { width: 10px; height: 27px; margin: 7px 0 0 -4px; }
.settings { margin: 12px 6px 0 auto; }
.settings svg { width: 14px; height: 14px; }
```
